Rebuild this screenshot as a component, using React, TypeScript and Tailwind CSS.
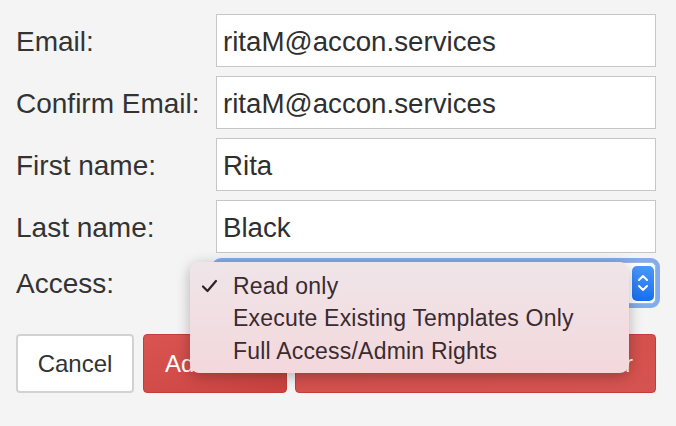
import React from "react";

const rows = [
  { label: "Email:", value: "ritaM@accon.services" },
  { label: "Confirm Email:", value: "ritaM@accon.services" },
  { label: "First name:", value: "Rita" },
  { label: "Last name:", value: "Black" },
];

export default function App() {
  return (
    <div
      className="relative w-[676px] h-[426px] bg-[#f4f4f4] overflow-hidden text-[#333]"
      style={{ fontFamily: '"Liberation Sans", Arial, sans-serif' }}
    >
      <div className="pt-[14px] pl-4 pr-5 flex flex-col gap-[9px]">
        {rows.map((r) => (
          <div key={r.label} className="flex items-center h-[53px]">
            <div className="w-[200px] text-[28px] leading-none pt-[2px]">{r.label}</div>
            <div className="flex-1 h-full flex items-center bg-white border border-[#c6c6c6] pl-[6px] pt-[2px] text-[27.7px] leading-none text-[#2f2f2f]">
              {r.value}
            </div>
          </div>
        ))}
        <div className="flex items-center h-[42px]">
          <div className="w-[200px] text-[28px] leading-none pt-[2px]">Access:</div>
          <div className="flex-1 h-full rounded-[5px] ring-4 ring-[#82acec] bg-white border border-[#9fb8e0] flex items-center justify-end pr-[1px]">
            <div className="w-[22px] h-[35px] rounded-[5px] bg-linear-to-b from-[#4a98fb] to-[#166ef0] flex items-center justify-center">
              <svg width="14" height="24" viewBox="0 0 14 24" fill="none" stroke="white" strokeWidth="2" strokeLinecap="round" strokeLinejoin="round">
                <path d="M3 9 L7 5 L11 9" />
                <path d="M3 15 L7 19 L11 15" />
              </svg>
            </div>
          </div>
        </div>
        <div className="flex h-[59px] mt-[21px]">
          <div className="w-[118px] h-full rounded-[4px] bg-white border-2 border-[#d2d2d2] flex items-center justify-center text-[24px] text-[#333]">
            Cancel
          </div>
          <div className="ml-[9px] w-[144px] h-full rounded-[4px] bg-linear-to-br from-[#da5552] to-[#c9423f] border border-[#c43d3a] flex items-center justify-center text-[24px] text-white">
            Add User
          </div>
          <div className="ml-[8px] flex-1 h-full rounded-[4px] bg-linear-to-br from-[#d24e4b] to-[#d55350] border border-[#c43d3a] flex items-center justify-center text-[24px] text-white whitespace-nowrap">
            Add User and Create Another
          </div>
        </div>
      </div>

      <div className="absolute left-[190px] top-[262px] w-[439px] h-[111px] rounded-[9px] bg-linear-to-b from-[#efe5e9] to-[#f3d8dc] shadow-[0_3px_14px_rgba(0,0,0,0.28)] pt-[8px] text-[23px] text-[#3a2b2f]">
        {["Read only", "Execute Existing Templates Only", "Full Access/Admin Rights"].map((t, i) => (
          <div key={t} className="flex items-center h-[32.5px]">
            <div className="w-[43px] pl-[11px] flex items-center">
              {i === 0 && (
                <svg width="17" height="14" viewBox="0 0 17 14" fill="none" stroke="#2e2226" strokeWidth="2.2" strokeLinecap="round" strokeLinejoin="round">
                  <path d="M2 7.5 L6.5 12 L15 2" />
                </svg>
              )}
            </div>
            <span className="leading-none tracking-[0.2px]">{t}</span>
          </div>
        ))}
      </div>
    </div>
  );
}
